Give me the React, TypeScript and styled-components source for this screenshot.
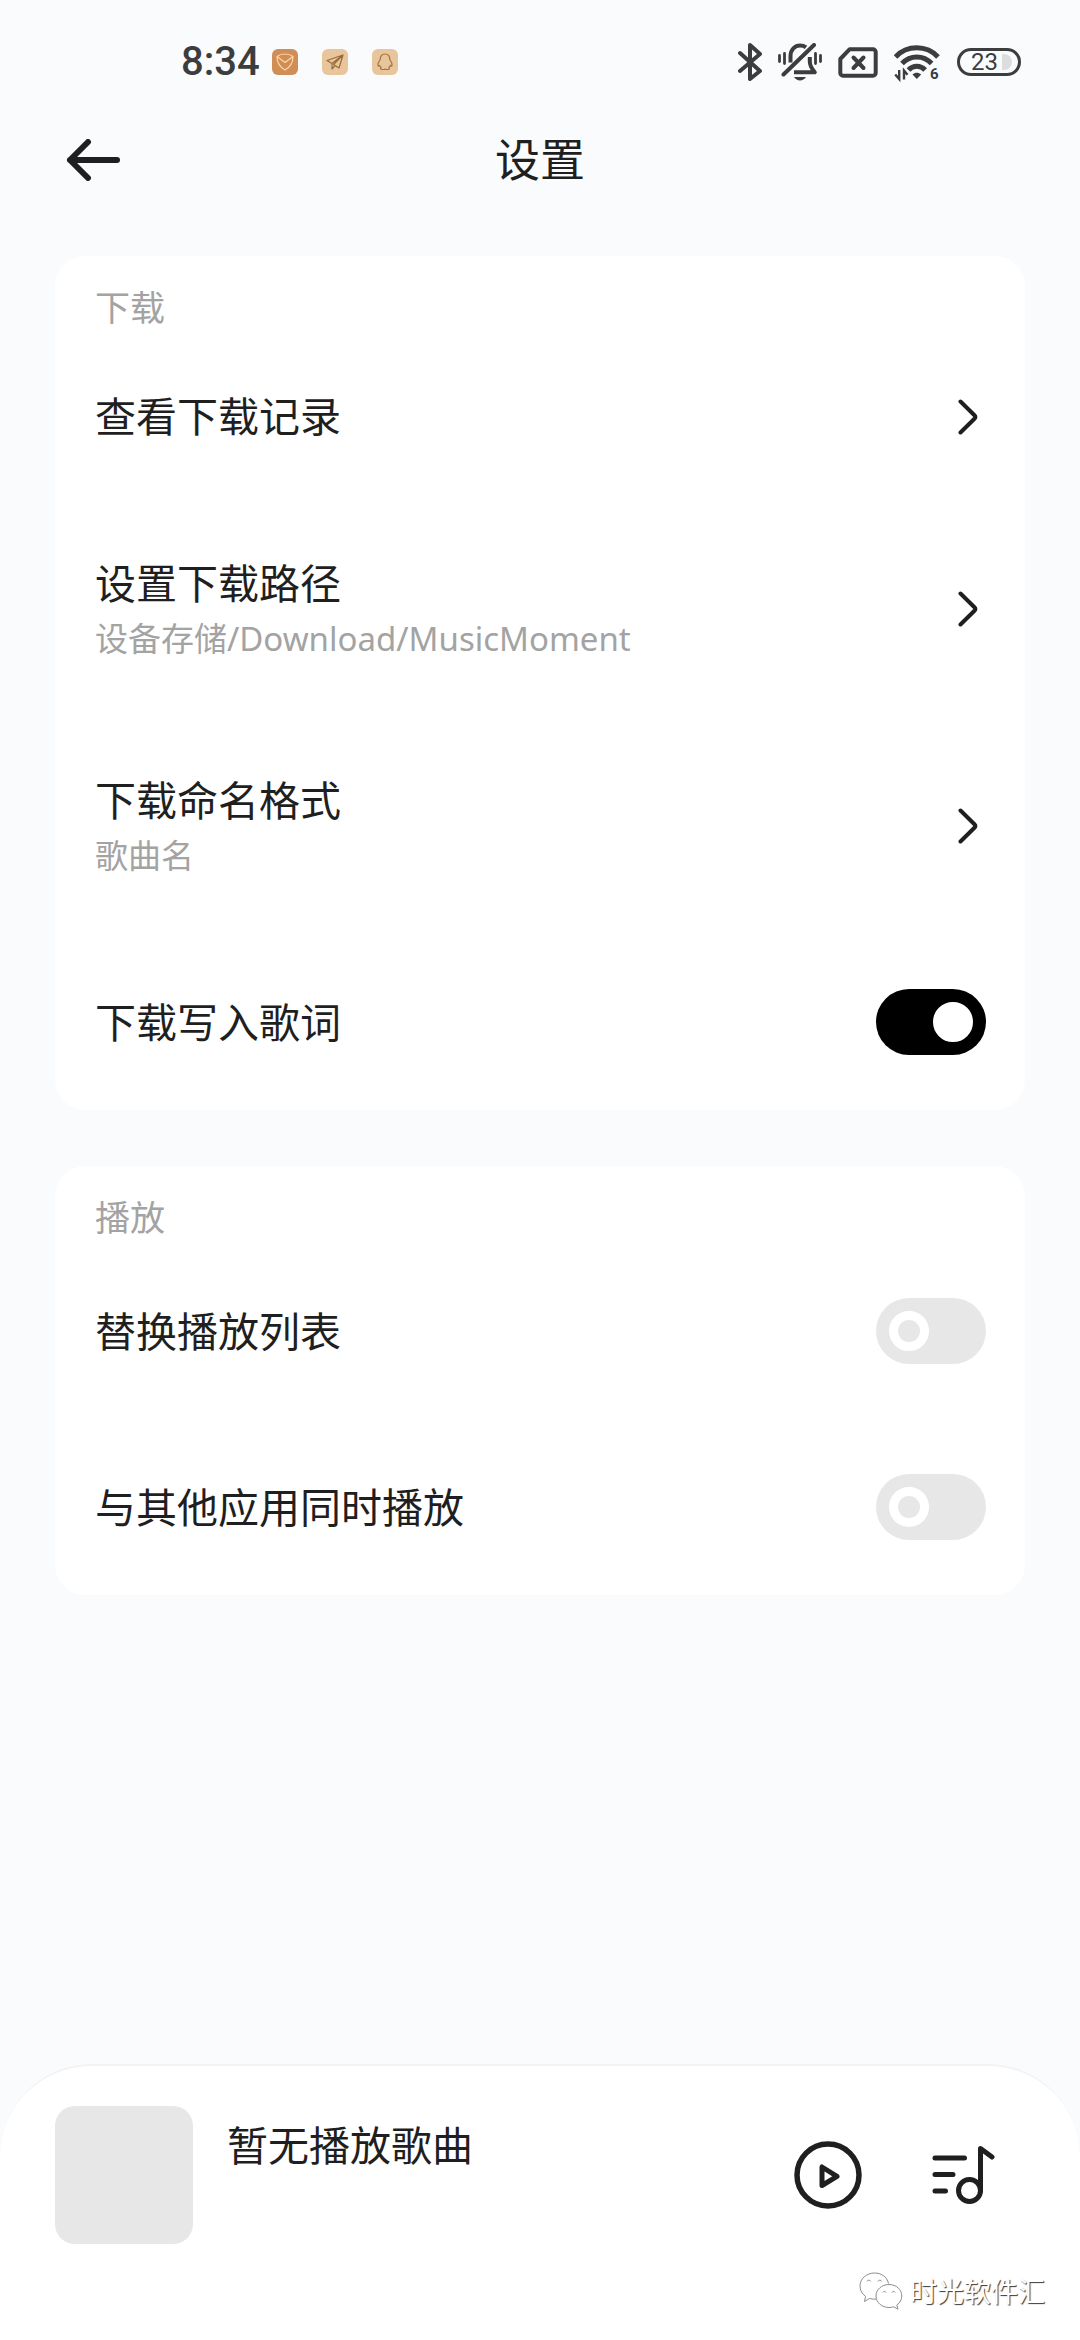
import React, { useState } from "react";
import styled, { createGlobalStyle } from "styled-components";

const ink = "#1f1f1f";
const muted = "#a3a3a3";
const statusInk = "#3b3d3e";

const GlobalStyle = createGlobalStyle`
  *, *::before, *::after { box-sizing: border-box; }
  body {
    margin: 0;
    background: #fafbfd;
    color: ${ink};
    font-family: "Noto Sans CJK SC", "Noto Sans", sans-serif;
  }
  button { font: inherit; color: inherit; border: 0; background: none; padding: 0; cursor: pointer; }
  svg { display: block; flex: none; }
`;

const Screen = styled.div`
  min-height: 100vh;
  display: flex;
  flex-direction: column;
`;

const StatusBar = styled.div`
  display: flex;
  align-items: center;
  justify-content: space-between;
  height: 124px;
  padding: 0 59px 0 181px;
  color: ${statusInk};
`;

const StatusGroup = styled.div<{ $gap: number }>`
  display: flex;
  align-items: center;
  gap: ${(p) => p.$gap}px;
`;

const Clock = styled.time`
  font: 500 40px/48px Roboto, sans-serif;
  margin-right: -12px;
`;

const AppBadge = styled.span<{ $fill: string }>`
  display: grid;
  place-items: center;
  width: 26px;
  height: 26px;
  border-radius: 6px;
  background: ${(p) => p.$fill};
`;

const Battery = styled.span`
  display: flex;
  align-items: center;
  justify-content: flex-end;
  gap: 4px;
  width: 64px;
  height: 28px;
  padding-right: 6px;
  border: 3px solid ${statusInk};
  border-radius: 14px;
  font: 400 24px/24px Roboto, sans-serif;

  &::after {
    content: "";
    width: 10px;
    height: 16px;
    border-radius: 0 8px 8px 0;
    background: #dcdddf;
  }
`;

const Header = styled.header`
  display: grid;
  grid-template-columns: 1fr auto 1fr;
  align-items: center;
  height: 72px;
  padding: 0 66px;
`;

const BackButton = styled.button`
  justify-self: start;
`;

const PageTitle = styled.h1`
  margin: 0;
  padding-bottom: 4px;
  font-size: 45px;
  line-height: 68px;
  font-weight: 400;
`;

const Content = styled.main`
  display: flex;
  flex-direction: column;
  gap: 56px;
  padding: 60px 55px;
`;

const Card = styled.section`
  display: flex;
  flex-direction: column;
  border-radius: 30px;
  background: #fff;
  padding: 27px 39px 0 40px;
`;

const CardTitle = styled.h2`
  margin: 0;
  padding-bottom: 4px;
  color: ${muted};
  font-size: 35px;
  line-height: 46px;
  font-weight: 400;
`;

const rowLayout = `
  display: flex;
  align-items: center;
  justify-content: space-between;
  padding: 55px 0;
  text-align: left;
  cursor: pointer;
`;

const LinkRow = styled.button`
  && {
    ${rowLayout}
    padding-right: 8px;
  }
`;

const SwitchRow = styled.label`
  ${rowLayout}
`;

const Labels = styled.span`
  display: flex;
  flex-direction: column;
`;

const Title = styled.span`
  padding-bottom: 4px;
  font-size: 41px;
  line-height: 53px;
`;

const Detail = styled.span`
  padding-top: 4px;
  color: ${muted};
  font-family: "Noto Sans", "Noto Sans CJK SC", sans-serif;
  font-size: 33px;
  line-height: 46px;
`;

const Switch = styled.input`
  appearance: none;
  display: flex;
  align-items: center;
  flex: none;
  width: 110px;
  height: 66px;
  margin: 0;
  padding: 0 13px;
  border-radius: 33px;
  background: #e7e7e7;
  cursor: pointer;

  &::before {
    content: "";
    width: 40px;
    height: 40px;
    border: 9px solid #fff;
    border-radius: 50%;
  }

  &:checked {
    justify-content: flex-end;
    background: #000;
  }

  &:checked::before {
    background: #fff;
  }
`;

const Player = styled.footer`
  margin-top: auto;
  padding: 40px 0 27px;
  border-top: 2px solid #f1f3f5;
  border-radius: 92px 92px 0 0;
  background: #fff;
`;

const NowPlaying = styled.div`
  display: flex;
  align-items: center;
  padding: 0 85px 0 55px;
`;

const Artwork = styled.div`
  flex: none;
  width: 138px;
  height: 138px;
  border-radius: 20px;
  background: #e7e7e7;
`;

const SongInfo = styled.div`
  display: flex;
  flex: 1;
  align-self: flex-start;
  padding: 11px 0 0 34px;
`;

const Controls = styled.div`
  display: flex;
  align-items: center;
  gap: 70px;
`;

const Credit = styled.div`
  display: flex;
  justify-content: flex-end;
  align-items: center;
  gap: 7px;
  margin-top: 25px;
  padding-right: 35px;
  color: #fff;
  font-size: 27px;
  line-height: 44px;
  text-shadow: 1px 1px 1px #3a3a3a;
`;

const BluetoothIcon = () => (
  <svg width="24" height="38" viewBox="0 0 24 38" fill="none" stroke="currentColor" strokeWidth="4" strokeLinecap="round" strokeLinejoin="round">
    <path d="M2 10 22 28 12 36V2l10 9L2 28" />
  </svg>
);

const MutedBellIcon = () => (
  <svg width="44" height="38" viewBox="0 0 44 38" fill="none" stroke="currentColor" strokeLinecap="round" strokeLinejoin="round">
    <g strokeWidth="4">
      <path d="M36 2 5.500 31.500" />
      <path d="M12.500 19.500V13C12.500 6.500 17 2.500 22 2.500c2.500 0 4.500.7 6 1.800" strokeLinecap="butt" />
      <path d="M31.800 14v4.500c0 4 1.200 6.500 5 10.800H16" strokeLinecap="butt" />
    </g>
    <path d="M1.500 12.500v6M6.500 10.500v10M37.500 10.500v10M42.500 12.500v6" strokeWidth="2.800" />
    <path d="M16 34h12c-1.500 2.300-3.500 3.500-6 3.500S17.500 36.300 16 34z" fill="currentColor" stroke="none" />
  </svg>
);

const NoSimIcon = () => (
  <svg width="40" height="31" viewBox="0 0 40 31" fill="none" stroke="currentColor" strokeLinecap="round" strokeLinejoin="round">
    <path d="M11.500 2.300H35a2.700 2.700 0 0 1 2.700 2.700v21a2.700 2.700 0 0 1-2.700 2.700H5A2.700 2.700 0 0 1 2.300 26V12z" strokeWidth="4" />
    <path d="m15.500 10.500 10 10.500m0-10.500-10 10.500" strokeWidth="4" />
  </svg>
);

const WifiIcon = () => (
  <svg width="47" height="42" viewBox="0 -4 47 42" fill="none" stroke="currentColor" strokeWidth="5">
    <path d="M1.500 12C7 6 14.500 2.800 22.800 2.800S38.500 6 44 12" />
    <path d="M8 18.500c4-4.200 9-6.600 14.800-6.600s10.800 2.400 14.800 6.600" />
    <path d="M14.500 25c2.200-2.400 5-3.700 8.300-3.700s6.100 1.300 8.300 3.700" />
    <path d="M18.500 29.500c2.600-2.200 6-2.200 8.600 0L22.800 34z" fill="currentColor" stroke="none" />
    <path d="M5.200 25v9l-4-4.500M10 34.500v-9l3.500 4.200" strokeWidth="2.400" />
    <text x="36" y="34" fill="currentColor" stroke="none" fontFamily="Roboto, sans-serif" fontWeight="700" fontSize="15">6</text>
  </svg>
);

const ShieldMark = () => (
  <svg width="18" height="18" viewBox="0 0 18 18" fill="none" stroke="#ffd79d" strokeWidth="1.200" strokeLinejoin="round">
    <path d="M1 3.500C3.500 1.500 6 1 9 1s5.500.5 8 2.500c0 6-2.500 10.500-8 13.500-5.500-3-8-7.500-8-13.500zM1 3.500l8 6 8-6" />
  </svg>
);

const PlaneMark = () => (
  <svg width="18" height="18" viewBox="0 0 18 18" fill="none" stroke="#9a6a3a" strokeWidth="1.200" strokeLinejoin="round">
    <path d="M17 2 1 7.500l5 3L17 2 7.500 11.500l5.500 3.500zM6 10.500v5.500l3-3.500" />
  </svg>
);

const PenguinMark = () => (
  <svg width="18" height="18" viewBox="0 0 18 18" fill="none" stroke="#a5703c" strokeWidth="1.200" strokeLinejoin="round">
    <path d="M9 1c3.200 0 4.800 2.300 4.800 5.500 1.500 2 2.500 4 2.200 6.200-.5.600-1.200.3-1.800-.2-.2 1-.7 1.700-1.400 2.300.8.600.6 1.700-.6 1.700H9.800L9 16l-.8.500H5.800c-1.200 0-1.400-1.100-.6-1.700-.7-.6-1.200-1.300-1.400-2.300-.6.500-1.300.8-1.800.2-.3-2.200.7-4.200 2.200-6.200C4.200 3.300 5.800 1 9 1z" />
  </svg>
);

const BackIcon = () => (
  <svg width="54" height="42" viewBox="0 0 54 42" fill="none" stroke={ink} strokeWidth="6" strokeLinecap="round" strokeLinejoin="round">
    <path d="M51 21H4M22 3 4 21l18 18" />
  </svg>
);

const ChevronIcon = () => (
  <svg width="20" height="36" viewBox="0 0 20 36" fill="none" stroke={ink} strokeWidth="4" strokeLinecap="round" strokeLinejoin="round">
    <path d="m2.500 2.500 14.200 14a2 2 0 0 1 0 3l-14.200 14" />
  </svg>
);

const PlayIcon = () => (
  <svg width="68" height="68" viewBox="0 0 68 68" fill="none" stroke={ink} strokeLinejoin="round">
    <circle cx="34" cy="34" r="31" strokeWidth="5.500" />
    <path d="M28 26v18.500L43 35.300z" strokeWidth="5" />
  </svg>
);

const QueueIcon = () => (
  <svg width="63" height="60" viewBox="0 0 63 60" fill="none" stroke={ink} strokeWidth="5" strokeLinecap="round" strokeLinejoin="round">
    <path d="M3 13h29.500M3 29.500h18M3 46h10.500" />
    <circle cx="37.500" cy="45.500" r="11" />
    <path d="M48.500 45.500V3.500l11.500 8.500" />
  </svg>
);

const ChatIcon = () => (
  <svg width="44" height="38" viewBox="0 0 44 38" fill="none" stroke="#8d8d8d" strokeWidth="1" strokeLinejoin="round">
    <path d="M29.500 11.500C28 4.500 22 1 15.500 1 7.500 1 1 6.700 1 14c0 4.300 2 8 5.600 10.400L5.500 29.500l5-3c2 .6 4.300.8 6.500.6" />
    <path d="M30 12.500c-7.200 0-13 5-13 11.500s5.800 11.500 13 11.500c1.700 0 3.200-.2 4.600-.7l4.400 2.400-1.200-4.200c3.200-2.200 5-5.300 5-9C42.800 17.500 37.200 12.500 30 12.500z" />
    <path d="M8 9.500c.6-1.800 3-1.800 3.600 0M19 9.500c.6-1.800 3-1.800 3.600 0M24 20.500c.5-1.500 2.500-1.500 3 0M33 20.500c.5-1.500 2.500-1.500 3 0" />
  </svg>
);

function LinkItem({ title, detail }: { title: string; detail?: string }) {
  return (
    <LinkRow type="button">
      <Labels>
        <Title>{title}</Title>
        {detail && <Detail>{detail}</Detail>}
      </Labels>
      <ChevronIcon />
    </LinkRow>
  );
}

function SwitchItem({ id, title, initial = false }: { id: string; title: string; initial?: boolean }) {
  const [on, setOn] = useState(initial);
  return (
    <SwitchRow htmlFor={id}>
      <Title>{title}</Title>
      <Switch id={id} type="checkbox" role="switch" checked={on} onChange={(e) => setOn(e.target.checked)} />
    </SwitchRow>
  );
}

export default function App() {
  return (
    <>
      <GlobalStyle />
      <Screen>
        <StatusBar>
          <StatusGroup $gap={24}>
            <Clock>8:34</Clock>
            <AppBadge $fill="#cf8d58"><ShieldMark /></AppBadge>
            <AppBadge $fill="#e8c59b"><PlaneMark /></AppBadge>
            <AppBadge $fill="#e8c59b"><PenguinMark /></AppBadge>
          </StatusGroup>
          <StatusGroup $gap={16}>
            <BluetoothIcon />
            <MutedBellIcon />
            <NoSimIcon />
            <WifiIcon />
            <Battery>23</Battery>
          </StatusGroup>
        </StatusBar>

        <Header>
          <BackButton type="button" aria-label="返回"><BackIcon /></BackButton>
          <PageTitle>设置</PageTitle>
        </Header>

        <Content>
          <Card>
            <CardTitle>下载</CardTitle>
            <LinkItem title="查看下载记录" />
            <LinkItem title="设置下载路径" detail="设备存储/Download/MusicMoment" />
            <LinkItem title="下载命名格式" detail="歌曲名" />
            <SwitchItem id="write-lyrics" title="下载写入歌词" initial />
          </Card>
          <Card>
            <CardTitle>播放</CardTitle>
            <SwitchItem id="replace-queue" title="替换播放列表" />
            <SwitchItem id="mix-audio" title="与其他应用同时播放" />
          </Card>
        </Content>

        <Player>
          <NowPlaying>
            <Artwork />
            <SongInfo>
              <Title>暂无播放歌曲</Title>
            </SongInfo>
            <Controls>
              <button type="button" aria-label="播放"><PlayIcon /></button>
              <button type="button" aria-label="播放列表"><QueueIcon /></button>
            </Controls>
          </NowPlaying>
          <Credit>
            <ChatIcon />
            <span>时光软件汇</span>
          </Credit>
        </Player>
      </Screen>
    </>
  );
}
